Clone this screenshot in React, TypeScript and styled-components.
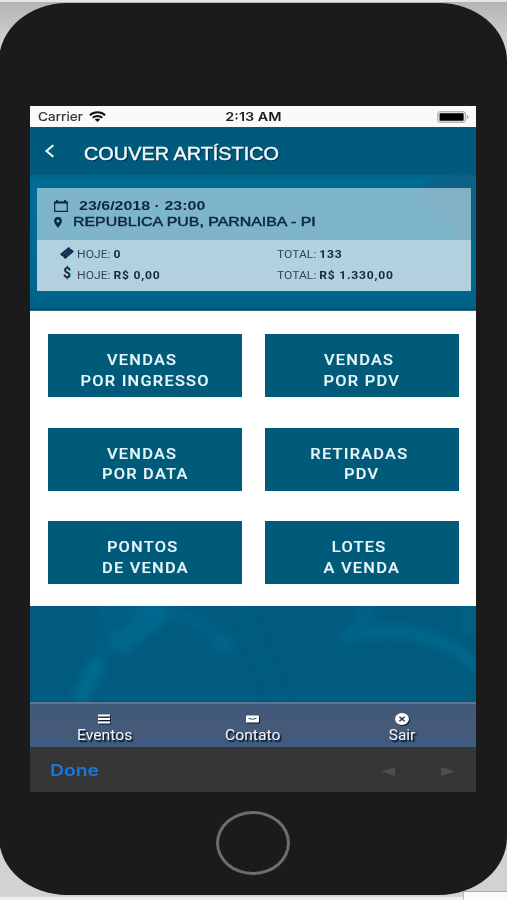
import React from "react";
import styled, { createGlobalStyle, css } from "styled-components";

const GlobalStyle = createGlobalStyle`
  * { box-sizing: border-box; }
  html, body, #root { height: 100%; }
  body { margin: 0; overflow: hidden; background: #cfcfcf; }
`;

const sans = css`font-family: "Liberation Sans", Arial, sans-serif;`;
const roboto = css`font-family: Roboto, "Liberation Sans", sans-serif;`;
const inter = css`font-family: Inter, "Liberation Sans", sans-serif;`;

const Desk = styled.div`
  position: relative;
  width: 507px;
  height: 900px;
  padding-top: 3px;
  overflow: hidden;
  background: linear-gradient(#e6e6e6 0 2px, #b4b4b4 2px, #d6d6d6 50px, #d2d2d2 896px, #f0f0f0 898px);
`;

const WindowCorner = styled.div`
  position: absolute;
  right: 0;
  bottom: 0;
  width: 44px;
  height: 9px;
  background: #fafafa;
  border-top: 1px solid #aaa;
  border-left: 1px solid #bbb;
`;

const Phone = styled.div`
  position: relative;
  display: flex;
  flex-direction: column;
  align-items: center;
  width: 508px;
  height: 892px;
  margin-left: -1px;
  padding-top: 103px;
  background: #1b1b1b;
  border-radius: 68px / 58px;
`;

const Screen = styled.main`
  display: flex;
  flex-direction: column;
  width: 446px;
  height: 686px;
  background: #fff;
`;

const Wide = styled.span<{ $x: number; $center?: boolean }>`
  display: inline-block;
  white-space: pre;
  transform: scaleX(${(p) => p.$x});
  transform-origin: ${(p) => (p.$center ? "center" : "left")};
`;

const StatusBar = styled.div`
  ${inter}
  display: grid;
  grid-template-columns: 1fr auto 1fr;
  align-items: center;
  height: 21px;
  padding: 0 7px 0 8px;
  background: #fafafa;
  color: #1c1c1c;
  font-size: 12px;
  line-height: 21px;
`;

const Carrier = styled.div`
  display: flex;
  align-items: center;
  gap: 12px;
  color: #333;
  -webkit-text-stroke: 0.2px #333;
`;

const Clock = styled.div`
  font-weight: 600;
`;

const BatterySlot = styled.div`
  display: flex;
  justify-content: flex-end;
`;

const Header = styled.header`
  ${sans}
  display: flex;
  align-items: center;
  height: 48px;
  padding: 0 14px;
  gap: 29px;
  background: #005a7b;
  color: #f4fafc;
  font-size: 17.5px;
  line-height: 48px;
  text-shadow: 1px 1px 1px #002b45;
  svg { margin-top: -1px; }
`;

const Title = styled.h1`
  margin: 5px 0 0;
  font: inherit;
  -webkit-text-stroke: 0.4px #f4fafc;
`;

const Hero = styled.section`
  position: relative;
  height: 136px;
  padding: 13px 6px 0 6.5px;
  background: linear-gradient(#00648a 0, #006c96 5px, #006a93 60%, #006389 132px, #00466a 135px, #6394a8);
`;

const Texture = styled.svg`
  position: absolute;
  inset: 0;
  width: 100%;
  height: 100%;
`;

const Card = styled.article`
  position: relative;
  display: flex;
  flex-direction: column;
  width: 434px;
  height: 103px;
`;

const Venue = styled.div`
  ${sans}
  display: grid;
  grid-auto-rows: 16px;
  height: 52px;
  padding: 10px 17px 0;
  background: rgba(217, 234, 240, 0.58);
  color: #0d2748;
  font-size: 13.5px;
  line-height: 16px;
`;

const VenueRow = styled.div<{ $bold?: boolean; $gap: number }>`
  display: flex;
  align-items: center;
  gap: ${(p) => p.$gap}px;
  font-weight: ${(p) => (p.$bold ? 700 : 400)};
  -webkit-text-stroke: ${(p) => (p.$bold ? 0 : 0.5)}px #0d2748;
`;

const Totals = styled.div`
  ${roboto}
  display: grid;
  grid-template-columns: 217px 1fr;
  grid-auto-rows: 21px;
  height: 51px;
  padding: 4px 0 0 23.5px;
  background: rgba(222, 235, 241, 0.8);
  color: #33475a;
  font-size: 11px;
  line-height: 21px;
`;

const Stat = styled.div`
  display: flex;
  align-items: center;
  gap: 3px;
  svg { margin-top: -3px; }
  b { color: #122941; font-weight: 700; letter-spacing: 0.7px; }
`;

const Menu = styled.nav`
  display: grid;
  grid-template-columns: 194px 194px;
  grid-auto-rows: 63px;
  gap: 30.7px 23px;
  height: 295px;
  padding: 23px 17px 0 18px;
  background: #fff;
`;

const MenuButton = styled.button`
  ${roboto}
  display: flex;
  flex-direction: column;
  align-items: center;
  height: 63px;
  padding: 17px 0 0;
  border: 0;
  background: #005a7a;
  color: #e9f6fa;
  font-size: 14.5px;
  font-weight: 500;
  line-height: 20.6px;
  letter-spacing: 1.1px;
  -webkit-text-stroke: 0.15px #e9f6fa;
`;

const FirstLine = styled.span`
  padding-right: 5.5px;
`;

const Backdrop = styled.section`
  position: relative;
  height: 96px;
  background: #005b7e;
`;

const TabBar = styled.footer`
  ${roboto}
  display: grid;
  grid-template-columns: repeat(3, 1fr);
  height: 45px;
  border-top: 2px solid #5c7693;
  background: linear-gradient(#40597a, #465a78 60%, #3d5b80);
  color: #f2f5f8;
  font-size: 14px;
  line-height: 16px;
  text-shadow: 1.5px 1.5px 1px #081526;
`;

const Tab = styled.a`
  display: flex;
  flex-direction: column;
  align-items: center;
  gap: 2px;
  padding-top: 9px;
  svg { filter: drop-shadow(1.5px 1.5px 0.5px #0a182a); }
`;

const Toolbar = styled.div`
  ${inter}
  display: flex;
  align-items: center;
  height: 45px;
  padding: 0 21px 0 19.5px;
  background: #363636;
  color: #1a77e0;
  font-size: 16.5px;
  font-weight: 600;
`;

const Arrows = styled.div`
  display: flex;
  gap: 46px;
  margin-left: auto;
  padding-top: 3px;
`;

const HomeButton = styled.div`
  width: 74px;
  height: 64px;
  margin-top: 19px;
  border: 3px solid #6d6d6d;
  border-radius: 50%;
`;

const WifiIcon = () => (
  <svg width="17" height="11" viewBox="0 0 17 11" fill="none" stroke="#111" strokeWidth="2">
    <path d="M0.9 4.2C5 .3 12 .3 16.1 4.2M3.7 6.8C6.4 4.4 10.6 4.4 13.3 6.8" />
    <path d="M8.5 11 5.8 8.6Q8.5 6.6 11.2 8.6Z" fill="#111" stroke="none" />
  </svg>
);

const BatteryIcon = () => (
  <svg width="32" height="12" viewBox="0 0 32 12">
    <rect x="0.6" y="0.6" width="28" height="10.8" rx="2.6" fill="#ddd" stroke="#aaa" />
    <rect x="2.6" y="2.3" width="24" height="7.4" rx="0.8" fill="#000" />
    <path d="M30 4v4q1.5-.5 1.5-2T30 4" fill="#999" />
  </svg>
);

const BackIcon = () => (
  <svg width="11" height="14" viewBox="0 0 11 14" fill="none" stroke="#f4fafc" strokeWidth="2.1">
    <path d="M9.3 1.3 2.500 7l6.800 5.700" />
  </svg>
);

const CalendarIcon = () => (
  <svg width="14" height="12" viewBox="0 0 14 12" fill="none" stroke="#0d2748">
    <path d="M.7 2h12.6v9.4H.7z" strokeWidth="1.2" />
    <path d="M.5 2.6h13M3 0v2M11 0v2" strokeWidth="1.8" />
  </svg>
);

const PinIcon = () => (
  <svg width="8" height="11" viewBox="0 0 8 11">
    <path fillRule="evenodd" fill="#0d2748" d="M4 0a4 4 0 0 1 4 3.8C8 6 6 8.500 4 11 2 8.500 0 6 0 3.800A4 4 0 0 1 4 0Zm0 2.400a1.500 1.500 0 1 0 0 3 1.500 1.500 0 0 0 0-3Z" />
  </svg>
);

const TicketIcon = () => (
  <svg width="14" height="12" viewBox="0 0 14 12">
    <path fill="#0d2748" d="M0 7.200 8.600 0l1.300 1.100q.2 1.500 1.900 1.500L14 4.500 5.200 12 3.700 10.600q-.1-1.300-1.700-1.600Z" />
    <path stroke="#7391a5" strokeWidth=".5" d="m3.400 7.500 5.500-4.700M5.400 9.200l5.500-4.700" />
  </svg>
);

const Dollar = styled.span`
  width: 14px;
  padding-left: 3px;
  color: #0d2748;
  font-size: 14px;
  font-weight: 700;
  line-height: 17px;
  margin-top: -4px;
`;

const ListIcon = () => (
  <svg width="12" height="12" viewBox="0 0 12 12" fill="#fff">
    <path d="M0 1.500h12v2H0zM0 5h12v2H0zM0 8.500h12v2H0z" />
  </svg>
);

const CardIcon = () => (
  <svg width="13" height="12" viewBox="0 0 13 12">
    <rect y="2.500" width="13" height="7" rx="1" fill="#fff" />
    <path d="M2.500 5.300 6.500 6.300l4-1" stroke="#34475f" fill="none" />
  </svg>
);

const CloseIcon = () => (
  <svg width="14" height="12" viewBox="0 0 14 12">
    <ellipse cx="7" cy="6" rx="7" ry="6" fill="#fff" />
    <path d="m4.400 3.700 5.200 4.600m0-4.600L4.400 8.300" stroke="#26364c" strokeWidth="1.500" />
  </svg>
);

const items = [
  ["VENDAS", "POR INGRESSO"],
  ["VENDAS", "POR PDV"],
  ["VENDAS", "POR DATA"],
  ["RETIRADAS", "PDV"],
  ["PONTOS", "DE VENDA"],
  ["LOTES", "A VENDA"],
];

export default function App() {
  return (
    <Desk>
      <GlobalStyle />
      <WindowCorner />
      <Phone>
        <Screen>
          <StatusBar>
            <Carrier><Wide $x={1.14}>Carrier</Wide><WifiIcon /></Carrier>
            <Clock><Wide $x={1.2} $center>2:13 AM</Wide></Clock>
            <BatterySlot><BatteryIcon /></BatterySlot>
          </StatusBar>
          <Header>
            <BackIcon />
            <Title><Wide $x={1.135}>COUVER ARTÍSTICO</Wide></Title>
          </Header>
          <Hero>
            <Texture viewBox="0 0 446 136" preserveAspectRatio="none">
              <defs><filter id="soft"><feGaussianBlur stdDeviation="3" /></filter></defs>
              <path d="M388 10 420 0H446V72L430 62 408 28Z" fill="#15587c" opacity=".6" filter="url(#soft)" />
            </Texture>
            <Card>
              <Venue>
                <VenueRow $bold $gap={11}><CalendarIcon /><Wide $x={1.185}>23/6/2018 · 23:00</Wide></VenueRow>
                <VenueRow $gap={11.5}><PinIcon /><Wide $x={1.178}>REPUBLICA PUB, PARNAIBA - PI</Wide></VenueRow>
              </Venue>
              <Totals>
                <Stat><TicketIcon /><Wide $x={1.1}>HOJE: <b>0</b></Wide></Stat>
                <Stat><Wide $x={1.1}>TOTAL: <b>133</b></Wide></Stat>
                <Stat><Dollar>$</Dollar><Wide $x={1.1}>HOJE: <b>R$ 0,00</b></Wide></Stat>
                <Stat><Wide $x={1.1}>TOTAL: <b>R$ 1.330,00</b></Wide></Stat>
              </Totals>
            </Card>
          </Hero>
          <Menu>
            {items.map(([first, second]) => (
              <MenuButton key={first + second}>
                <FirstLine><Wide $x={1.13} $center>{first}</Wide></FirstLine>
                <Wide $x={1.13} $center>{second}</Wide>
              </MenuButton>
            ))}
          </Menu>
          <Backdrop>
            <Texture viewBox="0 0 446 96" preserveAspectRatio="none">
              <defs><filter id="haze" x="-20%" y="-20%" width="140%" height="140%"><feGaussianBlur stdDeviation="4" /></filter></defs>
              <g filter="url(#haze)" fill="none" stroke="#00749c" strokeLinecap="round">
                <path d="M52 88 66 62" strokeWidth="17" opacity=".6" />
                <path d="M66 60 80 20" strokeWidth="14" opacity=".2" />
                <path d="M92 36 108 22 126 10" strokeWidth="24" opacity=".5" />
                <path d="M74 6Q160-6 196 40" strokeWidth="13" opacity=".3" />
                <path d="M190 38h8" strokeWidth="14" opacity=".25" />
                <path d="M210 0 248 92" strokeWidth="12" opacity=".12" />
                <path d="M316 30Q400 12 450 64" strokeWidth="13" opacity=".5" />
                <path d="M328 16 338 2M438 2v22" strokeWidth="14" opacity=".35" />
              </g>
            </Texture>
          </Backdrop>
          <TabBar>
            <Tab><ListIcon /><Wide $x={1.12} $center>Eventos</Wide></Tab>
            <Tab><CardIcon /><Wide $x={1.12} $center>Contato</Wide></Tab>
            <Tab><CloseIcon /><Wide $x={1.1} $center>Sair</Wide></Tab>
          </TabBar>
          <Toolbar>
            <Wide $x={1.17}>Done</Wide>
            <Arrows>
              <svg width="14" height="9" viewBox="0 0 14 9"><path d="M0 4.500 14 0v9z" fill="#4e4e4e" /></svg>
              <svg width="14" height="9" viewBox="0 0 14 9"><path d="M14 4.500 0 0v9z" fill="#4e4e4e" /></svg>
            </Arrows>
          </Toolbar>
        </Screen>
        <HomeButton />
      </Phone>
    </Desk>
  );
}
